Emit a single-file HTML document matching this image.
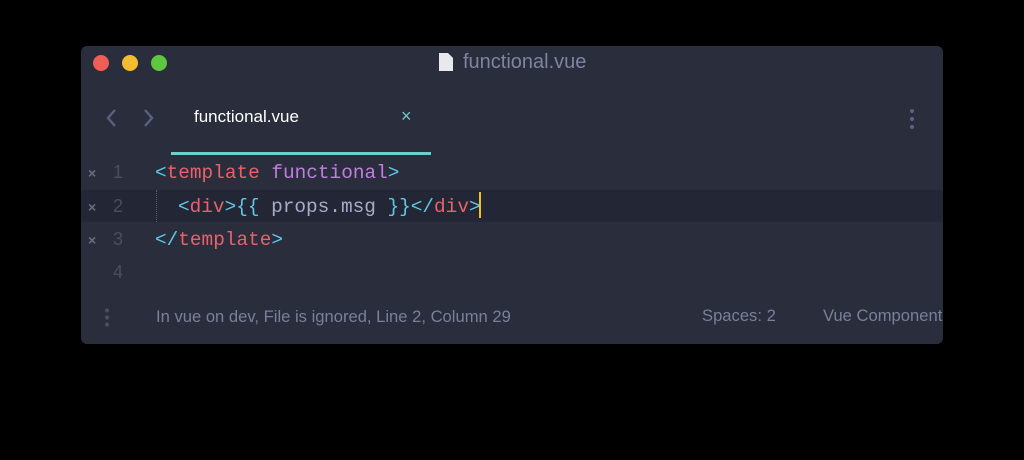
<!DOCTYPE html>
<html><head><style>
body{margin:0;width:1024px;height:460px;background:#000;position:relative;overflow:hidden;font-family:"Liberation Sans",sans-serif}
.win{position:absolute;left:81px;top:46px;width:862px;height:298px;background:#2a2d3c;border-radius:6px;overflow:hidden}
.dot{position:absolute;top:9px;width:16px;height:16px;border-radius:50%}
.abs{position:absolute;white-space:nowrap}
.code{font-family:"Liberation Mono",monospace;font-size:19.4px}
.hl{position:absolute;left:0;top:144px;width:862px;height:32px;background:#232634}
.r{color:#e8626a}.c{color:#5fc8e8}.p{color:#c07fe0}.g{color:#a8acc8}
.ln{color:#4a4e62;font-size:18px;font-family:"Liberation Sans",sans-serif}
.x{color:#6a6e84;font-size:14px;font-weight:bold}
</style></head><body>
<div class="win">
<div class="dot" style="left:12px;background:#ee5e57"></div>
<div class="dot" style="left:41px;background:#f3bd2f"></div>
<div class="dot" style="left:70px;background:#5fc73f"></div>
<svg class="abs" style="left:357px;top:6px" width="16" height="20"><path d="M1 1h9l5 5v13H1z" fill="#e8e8ee"/></svg>
<div class="abs" style="left:382px;top:5px;font-size:20px;color:#7f84a0">functional.vue</div>
<svg class="abs" style="left:22px;top:62px" width="60" height="20"><path d="M12 2l-7 8 7 8M42 2l7 8-7 8" stroke="#5a6080" stroke-width="2.4" fill="none"/></svg>
<div class="abs" style="left:113px;top:61px;font-size:17px;color:#fff">functional.vue</div>
<div class="abs" style="left:320px;top:60px;font-size:18px;color:#6fc8c8">×</div>
<div class="abs" style="left:829px;top:61px;width:4px;height:22px;background:radial-gradient(circle,#5a6080 2px,transparent 2.2px) 0 0/4px 8px"></div>
<div class="abs" style="left:90px;top:106px;width:260px;height:3px;background:#6fcfcf"></div>
<div class="hl"></div>
<div class="abs" style="left:75px;top:144px;width:0;height:32px;border-left:1px dotted #555a70"></div>
<div class="abs x" style="left:7px;top:119px">×</div><div class="abs ln" style="left:32px;top:116px">1</div>
<div class="abs x" style="left:7px;top:153px">×</div><div class="abs ln" style="left:32px;top:150px">2</div>
<div class="abs x" style="left:7px;top:186px">×</div><div class="abs ln" style="left:32px;top:183px">3</div>
<div class="abs ln" style="left:32px;top:216px">4</div>
<div class="abs code" style="left:74px;top:116px"><span class="c">&lt;</span><span class="r">template</span> <span class="p">functional</span><span class="c">&gt;</span></div>
<div class="abs code" style="left:97px;top:150px"><span class="c">&lt;</span><span class="r">div</span><span class="c">&gt;{{</span> <span class="g">props.msg</span> <span class="c">}}&lt;/</span><span class="r">div</span><span class="c">&gt;</span></div>
<div class="abs" style="left:398px;top:146px;width:2px;height:26px;background:#f0c020"></div>
<div class="abs code" style="left:74px;top:183px"><span class="c">&lt;/</span><span class="r">template</span><span class="c">&gt;</span></div>
<div class="abs" style="left:24px;top:261px;width:4px;height:20px;background:radial-gradient(circle,#4a4e66 2px,transparent 2.2px) 0 0/4px 7px"></div>
<div class="abs" style="left:75px;top:261px;font-size:16.6px;color:#7a7f9c">In vue on dev, File is ignored, Line 2, Column 29</div>
<div class="abs" style="left:621px;top:260px;font-size:16.6px;color:#7a7f9c">Spaces: 2</div>
<div class="abs" style="left:742px;top:260px;font-size:16.6px;color:#7a7f9c">Vue Component</div>
</div>
</body></html>
